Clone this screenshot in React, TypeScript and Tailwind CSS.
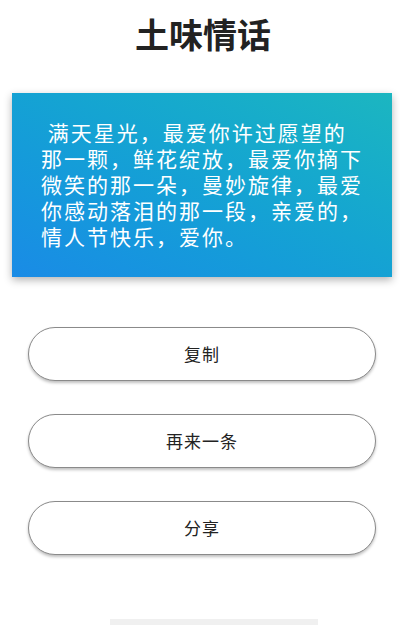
const lines = [
  " 满天星光，最爱你许过愿望的",
  "那一颗，鲜花绽放，最爱你摘下",
  "微笑的那一朵，曼妙旋律，最爱",
  "你感动落泪的那一段，亲爱的，",
  "情人节快乐，爱你。",
];

const buttons = ["复制", "再来一条", "分享"];

export default function App() {
  return (
    <main
      className="relative w-[400px] h-[625px] bg-white overflow-hidden"
      style={{ fontFamily: '"Noto Sans CJK SC", "Noto Sans", sans-serif' }}
    >
      <h1 className="pt-[15px] pl-[6px] text-center text-[34px] leading-[38px] font-bold text-[#222]">
        土味情话
      </h1>

      <section className="ml-[12px] mr-[8px] mt-[40px] h-[184px] bg-gradient-to-tr from-[#1a8be6] to-[#1cb6c0] shadow-[0_3px_8px_rgba(0,0,0,0.3)] pl-[29px] pt-[26px]">
        {lines.map((line) => (
          <p
            key={line}
            className="h-[26px] whitespace-pre text-white text-[21px] leading-[26px] tracking-[2px]"
          >
            {line}
          </p>
        ))}
      </section>

      <div className="mt-[50px] flex flex-col gap-[33px] pl-[28px] pr-[24px]">
        {buttons.map((label) => (
          <button
            key={label}
            className="h-[54px] w-full rounded-full border border-[#8a8a8a] bg-white text-[17px] text-[#222] tracking-[1px] shadow-[0_2px_3px_rgba(0,0,0,0.25)]"
          >
            {label}
          </button>
        ))}
      </div>

      <div className="absolute bottom-0 left-[110px] h-[6px] w-[208px] bg-[#f0f0f0]" />
    </main>
  );
}
